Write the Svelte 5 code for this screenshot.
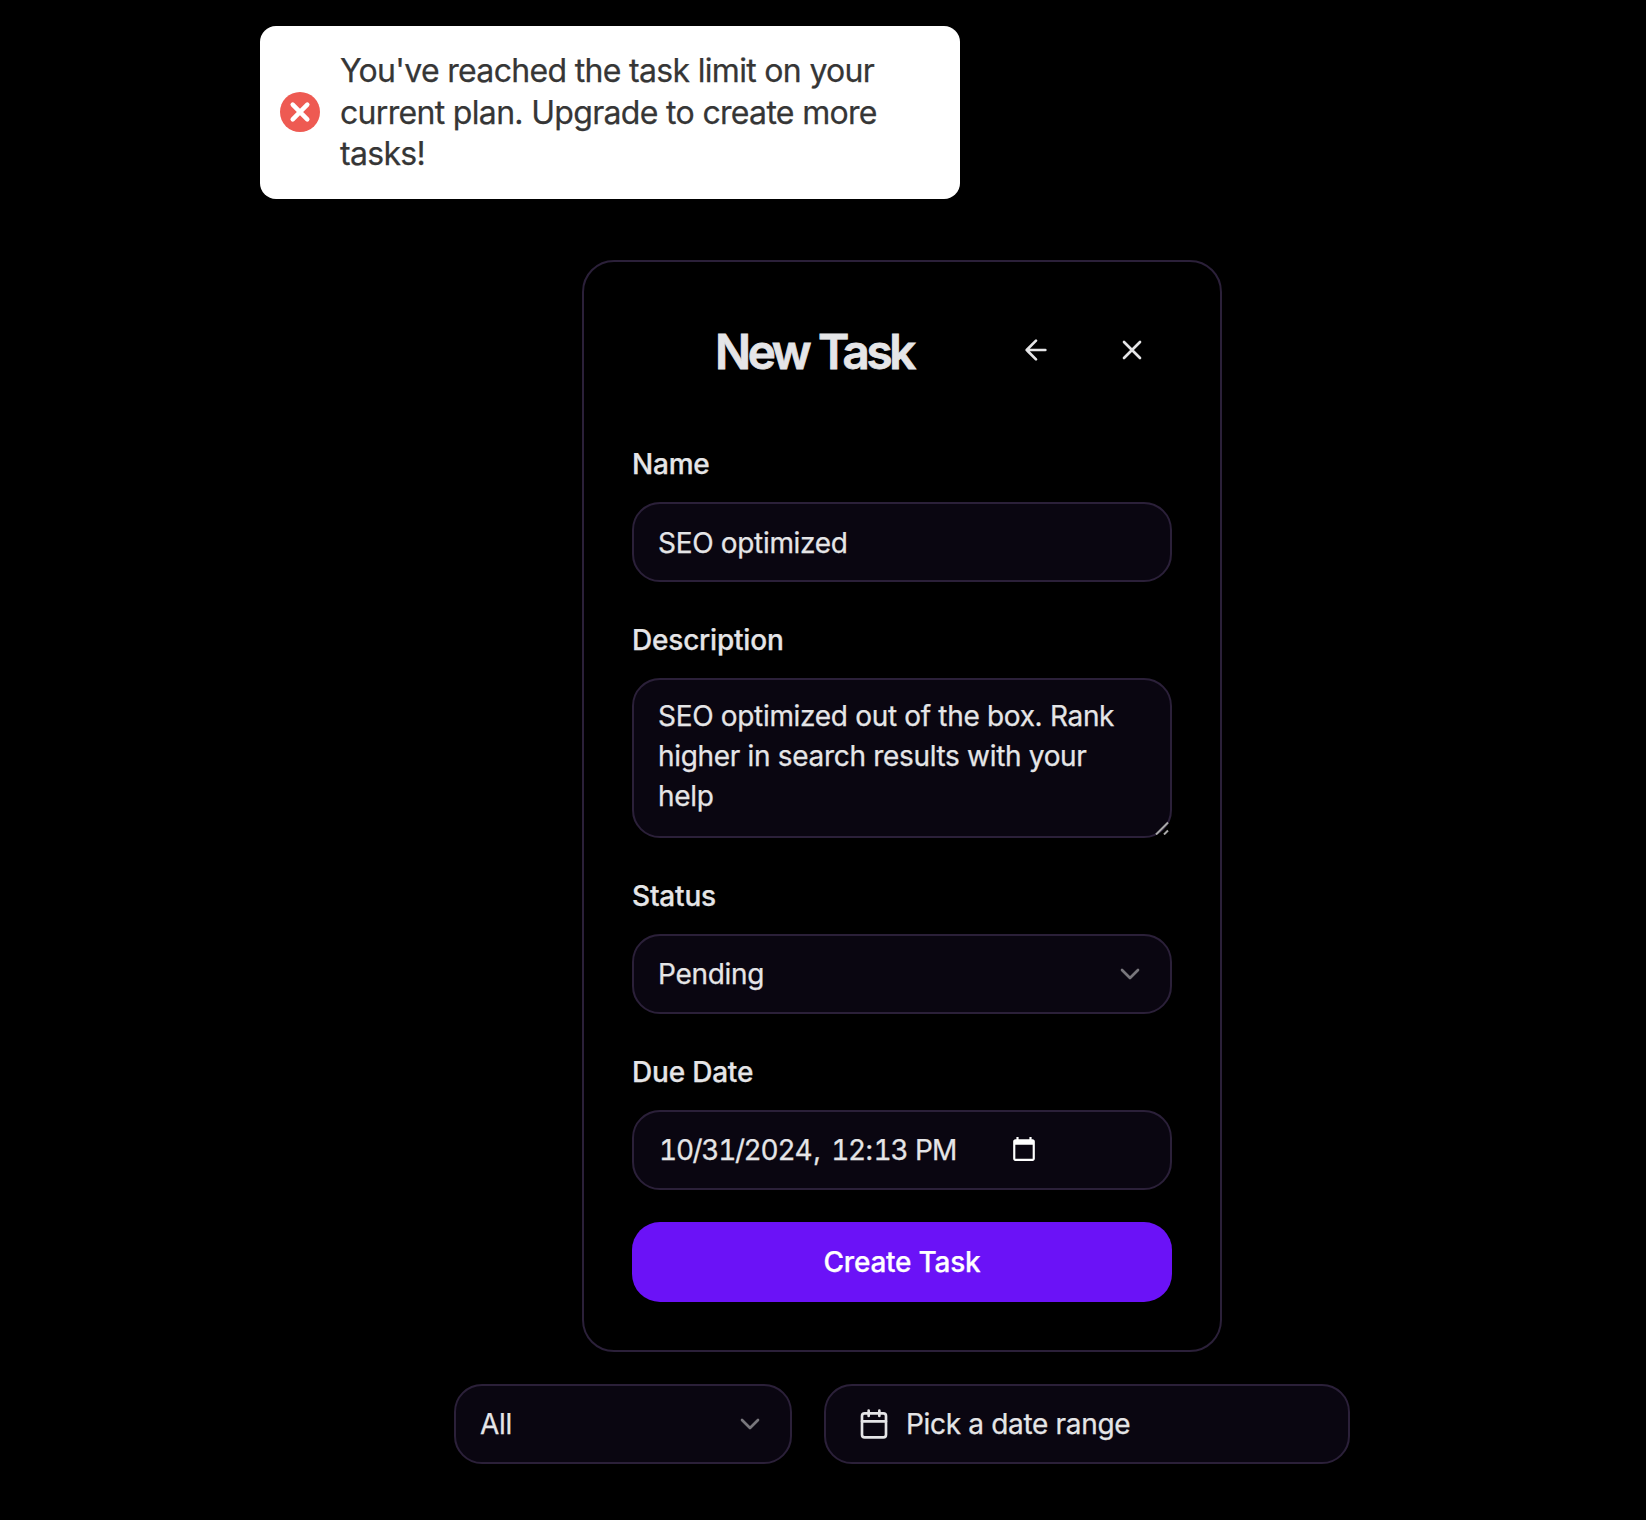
<script>
  let name = 'SEO optimized';
  let description = 'SEO optimized out of the box. Rank higher in search results with your help';
</script>

<div class="page">
  <div class="toast" role="alert">
    <svg class="toast-icon" viewBox="0 0 40 40" aria-hidden="true">
      <circle cx="20" cy="20" r="20" fill="#ee5a52" />
      <path d="M12.700 12.700 27.300 27.300M27.300 12.700 12.700 27.300" stroke="#fff" stroke-width="4.500" stroke-linecap="round" />
    </svg>
    <p>You've reached the task limit on your current plan. Upgrade to create more tasks!</p>
  </div>

  <main>
    <section class="card">
      <header>
        <h1>New Task</h1>
        <div class="actions">
          <button class="icon-btn" aria-label="Back">
            <svg class="icon" viewBox="0 0 24 24"><path d="m12 19-7-7 7-7M19 12H5" /></svg>
          </button>
          <button class="icon-btn" aria-label="Close">
            <svg class="icon" viewBox="0 0 24 24"><path d="M18 6 6 18M6 6l12 12" /></svg>
          </button>
        </div>
      </header>

      <div class="field">
        <span class="label">Name</span>
        <div class="control text">{name}</div>
      </div>
      <div class="field">
        <span class="label">Description</span>
        <div class="control area">
          {description}
          <svg class="grip" viewBox="0 0 14 14"><path d="M1 13.500 13 1.500M9 13.500l4-4" /></svg>
        </div>
      </div>
      <div class="field">
        <span class="label">Status</span>
        <div class="control select">
          <span>Pending</span>
          <svg class="icon chevron" viewBox="0 0 24 24"><path d="m6 9 6 6 6-6" /></svg>
        </div>
      </div>
      <div class="field">
        <span class="label">Due Date</span>
        <div class="control date">
          <div class="datetime">
            <span class="pair">10</span><span class="sep">/</span><span class="pair">31</span><span class="sep">/</span><span class="year">2024</span><span class="comma">,</span><span class="pair">12</span><span class="sep">:</span><span class="pair">13</span><span class="meridiem">PM</span>
          </div>
          <svg class="picker" viewBox="0 0 24 24"><path d="M20 3h-1V1h-2v2H7V1H5v2H4c-1.100 0-2 .9-2 2v16c0 1.100.9 2 2 2h16c1.100 0 2-.9 2-2V5c0-1.100-.9-2-2-2zm0 18H4V8h16v13z" /></svg>
        </div>
      </div>
      <button class="submit">Create Task</button>
    </section>

    <div class="filters">
      <div class="control select status-filter">
        <span>All</span>
        <svg class="icon chevron" viewBox="0 0 24 24"><path d="m6 9 6 6 6-6" /></svg>
      </div>
      <div class="control range">
        <svg class="icon" viewBox="0 0 24 24">
          <path d="M8 2v4M16 2v4M3 10h18" /><rect x="3" y="4" width="18" height="18" rx="2" />
        </svg>
        <span>Pick a date range</span>
      </div>
    </div>
  </main>
</div>

<style>
  :global(body) { margin: 0; background: #000; }
  .page, .page * { box-sizing: border-box; }
  .page {
    min-height: 1520px;
    padding-top: 26px;
    background: #000;
    color: #e5e5e7;
    font-family: Inter, "Liberation Sans", sans-serif;
    font-size: 28px;
    line-height: 40px;
    letter-spacing: -0.32px;
    -webkit-text-stroke: 0.25px currentColor;
  }
  .toast {
    display: flex;
    align-items: center;
    width: 700px;
    height: 173px;
    margin-left: 260px;
    padding: 16px 20px;
    border-radius: 16px;
    background: #fff;
    color: #363636;
    font-size: 32px;
    line-height: 41.6px;
    letter-spacing: -0.68px;
  }
  .toast-icon { flex: none; width: 40px; height: 40px; margin-bottom: 1px; }
  .toast p { flex: 1; margin: 8px 20px; }
  main {
    display: flex;
    flex-direction: column;
    align-items: center;
    gap: 32px;
    padding: 61px 0 0 158px;
  }
  .card {
    display: flex;
    flex-direction: column;
    width: 640px;
    height: 1092px;
    padding: 48px;
    border: 2px solid #2b2039;
    border-radius: 32px;
  }
  header {
    display: flex;
    align-items: center;
    height: 80px;
    margin-bottom: 55px;
  }
  h1 {
    flex: 1;
    margin: 0;
    padding-top: 3px;
    font-size: 47.5px;
    line-height: 64px;
    font-weight: 600;
    letter-spacing: -3.3px;
    word-spacing: 1px;
    text-align: center;
    -webkit-text-stroke: 0.8px currentColor;
  }
  .actions { display: flex; gap: 16px; }
  button { border: 0; font: inherit; letter-spacing: inherit; color: inherit; background: none; padding: 0; }
  .icon-btn { display: grid; place-items: center; width: 80px; height: 80px; }
  .icon {
    flex: none;
    width: 32px;
    height: 32px;
    fill: none;
    stroke: currentColor;
    stroke-width: 2;
    stroke-linecap: round;
    stroke-linejoin: round;
  }
  .field { display: flex; flex-direction: column; gap: 19px; margin-bottom: 39px; }
  .label { height: 38px; font-weight: 500; line-height: 38px; letter-spacing: -0.2px; }
  .control {
    display: flex;
    align-items: center;
    height: 80px;
    padding: 0 24px;
    border: 2px solid #2b2039;
    border-radius: 28px;
    background: #0a0611;
  }
  .text { padding-top: 2px; }
  .area { position: relative; display: block; height: 160px; padding-top: 16px; }
  .grip {
    position: absolute;
    right: 1px;
    bottom: 1px;
    width: 14px;
    height: 14px;
    fill: none;
    stroke: #a9a9a9;
    stroke-width: 2;
  }
  .select { justify-content: space-between; }
  .chevron { opacity: 0.5; }
  .datetime { display: flex; width: 353px; padding-left: 1px; }
  .pair, .year { font-variant-numeric: tabular-nums; letter-spacing: -1.2px; }
  .pair { width: 33.6px; }
  .year { width: 67.4px; }
  .sep { width: 8.7px; text-align: center; }
  .comma { width: 20.2px; padding-left: 2px; }
  .meridiem { padding-left: 8px; letter-spacing: -1px; }
  .picker { width: 26px; height: 26px; margin-bottom: 2px; fill: #fff; }
  .submit {
    flex: none;
    height: 80px;
    margin-top: -7px;
    border-radius: 28px;
    background: #6b12f7;
    color: #fff;
    font-weight: 500;
    letter-spacing: -0.24px;
  }
  .filters { display: flex; gap: 32px; }
  .status-filter { width: 338px; }
  .range { gap: 16px; width: 526px; padding: 0 32px; }
</style>
